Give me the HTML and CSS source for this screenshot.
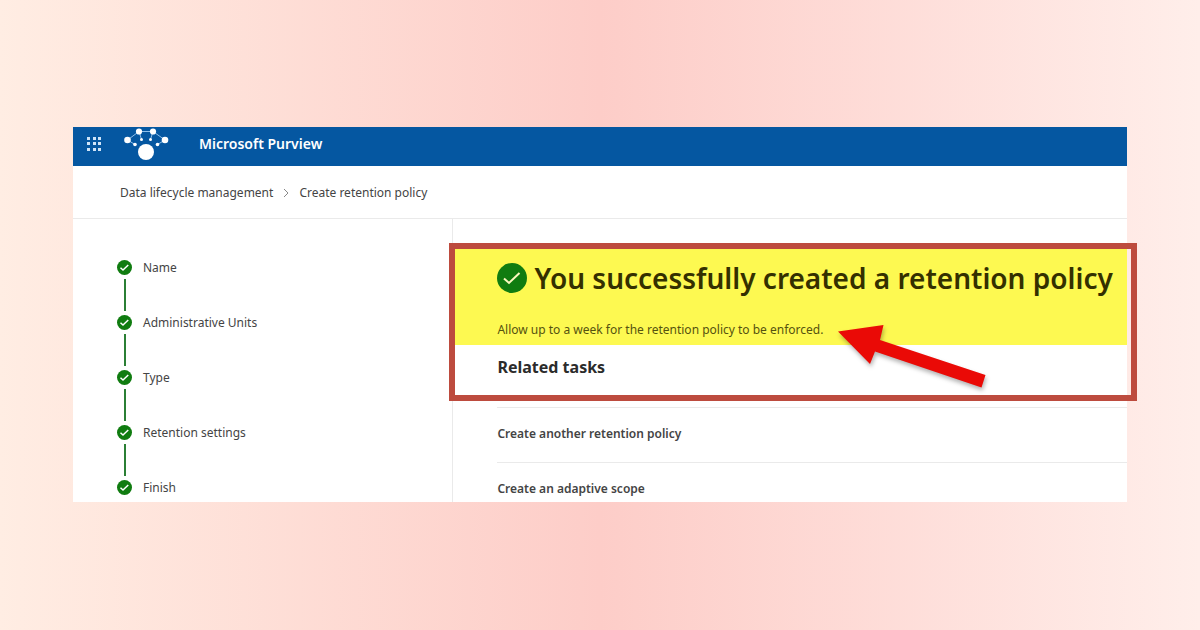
FILE: index.html
```html
<!DOCTYPE html>
<html lang="en">
<head>
    <meta charset="utf-8">
    <title>Microsoft Purview</title>
    <link rel="stylesheet" href="styles.css">
</head>
<body>
    <!-- shared icons -->
    <svg class="sprite" aria-hidden="true">
        <symbol id="check" viewBox="0 0 30 30">
            <circle cx="15" cy="15" r="15" fill="#107c10"/>
            <path d="M7 15.500l5 4.500 10.500-10" fill="none" stroke="currentColor" stroke-width="var(--tick)"/>
        </symbol>
    </svg>

    <div class="window">
        <header class="topbar">
            <button class="launcher" aria-label="App launcher">
                <svg width="16" height="16" viewBox="0 0 16 16" fill="#cfe4f8">
                    <rect x="1" y="1" width="3" height="3"/><rect x="7" y="1" width="3" height="3"/><rect x="12" y="1" width="3" height="3"/>
                    <rect x="1" y="6" width="3" height="3"/><rect x="7" y="6" width="3" height="3"/><rect x="12" y="6" width="3" height="3"/>
                    <rect x="1" y="12" width="3" height="3"/><rect x="7" y="12" width="3" height="3"/><rect x="12" y="12" width="3" height="3"/>
                </svg>
            </button>
            <svg class="logo" width="46" height="34" viewBox="0 0 46 34" fill="#fff">
                <path d="M4.500 13L16 4.500h14L42 13M4.500 13l7.500 4.500M42 13l-7.500 4.500M16 4.500l2.500 8M30 4.500l-2.500 8" fill="none" stroke="#8fc0ec" stroke-width="1"/>
                <circle cx="23" cy="25" r="8"/>
                <circle cx="4.500" cy="13" r="3.300"/>
                <circle cx="42" cy="13" r="3.300"/>
                <circle cx="16" cy="4.500" r="3.100"/>
                <circle cx="30" cy="4.500" r="3.100"/>
                <circle cx="12" cy="17.500" r="1.800"/>
                <circle cx="34.500" cy="17.500" r="1.800"/>
                <circle cx="18.500" cy="12.500" r="1.500"/>
                <circle cx="27.500" cy="12.500" r="1.500"/>
            </svg>
            <span class="brand">Microsoft Purview</span>
        </header>

        <nav class="breadcrumb" aria-label="Breadcrumb">
            <a href="#">Data lifecycle management</a>
            <svg width="6" height="10" viewBox="0 0 6 10"><path d="M1 1l4 4-4 4" fill="none" stroke="#888"/></svg>
            <a href="#" aria-current="page">Create retention policy</a>
        </nav>

        <div class="content">
            <ol class="steps">
                <li><svg class="step-icon"><use href="#check"/></svg>Name</li>
                <li><svg class="step-icon"><use href="#check"/></svg>Administrative Units</li>
                <li><svg class="step-icon"><use href="#check"/></svg>Type</li>
                <li><svg class="step-icon"><use href="#check"/></svg>Retention settings</li>
                <li><svg class="step-icon"><use href="#check"/></svg>Finish</li>
            </ol>

            <main class="main">
                <section class="result">
                    <div class="highlight">
                        <h1><svg class="title-icon"><use href="#check"/></svg>You successfully created a retention policy</h1>
                        <p>Allow up to a week for the retention policy to be enforced.
                            <svg class="arrow" width="154" height="70" viewBox="0 0 154 70">
                                <path d="M2 9.500L47.500 3 44 18l105.500 35-4 12.500L39 29.500 34 42z" fill="#ea0a06"/>
                            </svg>
                        </p>
                    </div>
                    <h2>Related tasks</h2>
                </section>
                <ul class="tasks">
                    <li><a href="#">Create another retention policy</a></li>
                    <li><a href="#">Create an adaptive scope</a></li>
                </ul>
            </main>
        </div>
    </div>
</body>
</html>
```
FILE: styles.css
```css
* {
    box-sizing: border-box;
}
body {
    margin: 0;
    padding: 127px 73px;
    min-height: 100vh;
    font-family: "Noto Sans", "Open Sans", sans-serif;
    font-size: 12px;
    line-height: 16px;
    color: #444;
    background: linear-gradient(to right, #ffede3, #fdcdc8 50%, #ffeeea);
}
h1, h2, p, ul, ol {
    margin: 0;
    padding: 0;
}
ul, ol {
    list-style: none;
}
a {
    color: inherit;
    text-decoration: none;
}
.sprite {
    position: absolute;
    width: 0;
    height: 0;
}
.window {
    background: #fff;
}
.topbar {
    display: flex;
    align-items: center;
    height: 39px;
    padding: 0 13px 5px;
    background: #0557a1;
    color: #fff;
}
.launcher {
    display: flex;
    padding: 0;
    border: 0;
    background: none;
    cursor: pointer;
}
.logo {
    margin: 0 30px 0 21px;
}
.brand {
    font-size: 14px;
    font-weight: 600;
}
.breadcrumb {
    display: flex;
    align-items: center;
    gap: 10px;
    height: 53px;
    padding: 2px 0 0 47px;
    border-bottom: 1px solid #eaeaea;
}
.content {
    display: flex;
}
.steps {
    flex: none;
    width: 36%;
    padding: 41px 0 7px 44px;
}
.steps li {
    --tick: 3;
    display: grid;
    grid-template-columns: 15px 1fr;
    grid-template-rows: 15px;
    column-gap: 11px;
    align-items: center;
}
.steps li:not(:last-child)::after {
    content: "";
    width: 2px;
    height: 32px;
    margin: 4px 7px;
    background: #2b7f35;
}
.step-icon {
    width: 15px;
    height: 15px;
    color: #fff;
}
.main {
    flex: 1;
    min-width: 0;
    border-left: 1px solid #eaeaea;
    padding-top: 24px;
}
.result {
    position: relative;
    height: 158px;
    padding: 6px 0;
    color: #2b2b2b;
}
/* red frame drawn around the result */
.result::after {
    content: "";
    position: absolute;
    inset: 0 -10px 0 -4px;
    border: 6px solid #bd4b3e;
}
.highlight {
    height: 96px;
    padding: 9px 0 0 44px;
    background: #fdf951;
}
h1 {
    --tick: 2;
    display: flex;
    align-items: center;
    gap: 7px;
    font-size: 28px;
    font-weight: 650;
    line-height: 40px;
    white-space: nowrap;
    color: #343000;
}
.title-icon {
    flex: none;
    width: 30px;
    height: 30px;
    color: #fdf9c0;
}
.highlight p {
    position: relative;
    width: fit-content;
    margin-top: 24px;
    color: #55520f;
}
.arrow {
    position: absolute;
    top: 0;
    left: 100%;
    margin-left: 13px;
    filter: drop-shadow(1px 3px 2px rgba(0, 0, 0, 0.3));
}
h2 {
    padding: 11px 0 0 44px;
    font-size: 16px;
    font-weight: 700;
    line-height: 22px;
}
.tasks {
    padding: 6px 0 0 44px;
    font-weight: 600;
}
.tasks li {
    padding: 18px 0 20px;
    border-top: 1px solid #eaeaea;
}
.tasks li:last-child {
    padding-bottom: 5px;
}
```
